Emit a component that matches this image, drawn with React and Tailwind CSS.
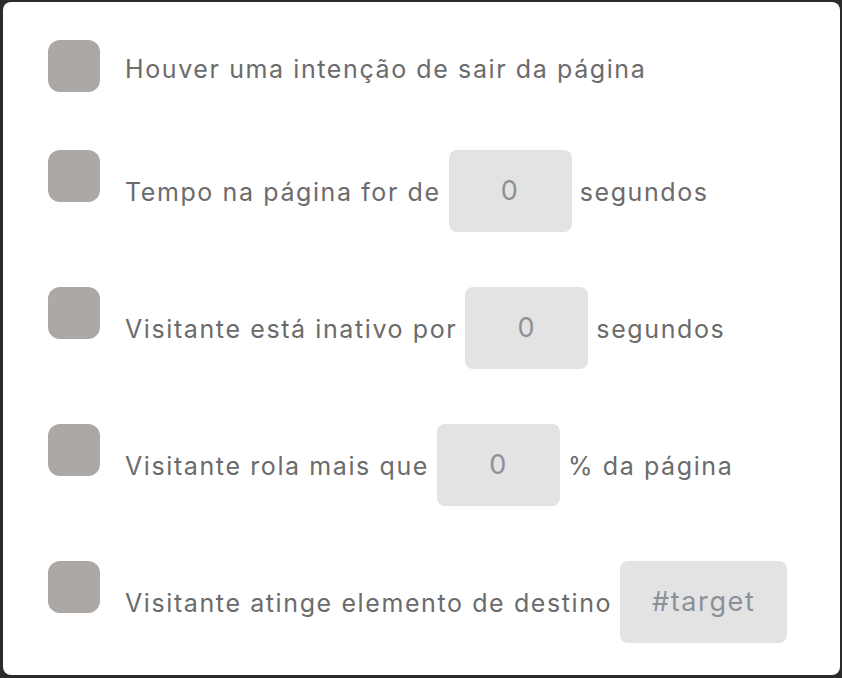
import React from "react";

const rows = [
  { before: "Houver uma intenção de sair da página" },
  { before: "Tempo na página for de", value: "0", after: "segundos" },
  { before: "Visitante está inativo por", value: "0", after: "segundos" },
  { before: "Visitante rola mais que", value: "0", after: "% da página" },
  { before: "Visitante atinge elemento de destino", value: "#target", wide: true },
];

const App = () => {
  return (
    <div className="bg-[#2b2b2b] h-[678px] w-[842px] pt-[2px] pl-[3px] pr-[2px] pb-[3px]">
      <div
        className="bg-white h-full rounded-lg pl-[45px] pt-[38px] text-[#6b6b6b]"
        style={{ fontFamily: "Inter, 'Open Sans', sans-serif" }}
      >
        {/* first row has no input */}
        <div className="flex items-start">
          <div className="w-[52px] h-[52px] rounded-xl bg-[#aca8a5] shrink-0" />
          <div className="h-[60px] flex items-center ml-[25px] text-[25px] tracking-[1.6px] whitespace-nowrap">
            {rows[0].before}
          </div>
        </div>

        {rows.slice(1).map((r, i) => (
          <div key={i} className={`flex items-start ${i === 0 ? "mt-[50px]" : "mt-[55px]"}`}>
            <div className="w-[52px] h-[52px] rounded-xl bg-[#aca8a5] shrink-0" />
            <div className="flex items-center ml-[25px] text-[25px] tracking-[1.6px] whitespace-nowrap">
              <span className="pt-1">{r.before}</span>
              <div
                className={`ml-2 h-[82px] rounded-lg bg-[#e3e3e3] flex items-center justify-center text-[#8b9099] text-[27px] shrink-0 ${
                  r.wide ? "w-[167px]" : "w-[123px]"
                }`}
              >
                {r.value}
              </div>
              {r.after && <span className="ml-2 pt-1">{r.after}</span>}
            </div>
          </div>
        ))}
      </div>
    </div>
  );
};

export default App;
